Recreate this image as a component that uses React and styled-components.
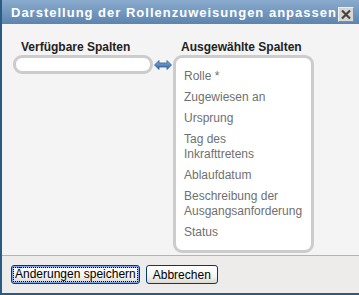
import React from 'react';
import styled, { createGlobalStyle } from 'styled-components';

const GlobalStyle = createGlobalStyle`
  html, body {
    margin: 0;
    padding: 0;
    background: #f4f4f4;
  }
  * {
    box-sizing: border-box;
  }
`;

const Dialog = styled.div`
  width: 359px;
  height: 295px;
  display: flex;
  flex-direction: column;
  border-left: 2px solid #2b5a85;
  border-bottom: 2px solid #2b5a85;
  font-family: "Liberation Sans", Arial, sans-serif;
  overflow: hidden;
`;

const TitleBar = styled.div`
  height: 24px;
  flex: none;
  display: flex;
  align-items: center;
  justify-content: space-between;
  padding: 0 5px 0 9px;
  background: linear-gradient(to bottom, #8aabcd 0%, #7398bf 50%, #5b84ae 100%);
`;

const Title = styled.div`
  color: #ffffff;
  font-size: 13px;
  font-weight: bold;
  letter-spacing: 1px;
  white-space: nowrap;
`;

const CloseButton = styled.button`
  width: 16px;
  height: 15px;
  flex: none;
  padding: 0;
  margin-top: 4px;
  display: flex;
  align-items: center;
  justify-content: center;
  background: #d8d6d0;
  border: 1px solid #8e8e8e;
  border-top-color: #f0f0f0;
  border-left-color: #f0f0f0;
`;

const Body = styled.div`
  flex: 1;
  background: #f4f4f4;
  padding: 16px 0 0 11px;
  display: flex;
  align-items: flex-start;
`;

const Column = styled.div`
  width: ${p => p.width}px;
  flex: none;
  display: flex;
  flex-direction: column;
`;

const Label = styled.div`
  font-size: 12px;
  font-weight: bold;
  line-height: 14px;
  color: #222;
  padding-left: 8px;
  margin-bottom: 1px;
`;

const ListBox = styled.div`
  background: #ffffff;
  border: 3px solid #cccccc;
  border-radius: 9px;
  height: ${p => p.height}px;
  padding: 11px 0 0 8px;
`;

const Item = styled.div`
  width: 112px;
  font-size: 12px;
  line-height: 15px;
  color: #707070;
  margin-bottom: 6px;
  white-space: normal;
`;

const Swap = styled.div`
  width: 20px;
  flex: none;
  display: flex;
  justify-content: center;
  padding-top: 20px;
`;

const Footer = styled.div`
  height: 38px;
  flex: none;
  background: #edecea;
  border-top: 1px solid #b4b4b4;
  display: flex;
  align-items: flex-start;
  gap: 6px;
  padding: 9px 0 0 9px;
`;

const Button = styled.button`
  height: 19px;
  padding: 0 ${p => (p.primary ? 2 : 6)}px;
  font-family: "Liberation Sans", Arial, sans-serif;
  font-size: 12px;
  color: #000;
  border: 1px solid #003c74;
  border-radius: 3px;
  background: linear-gradient(to bottom, #ffffff 0%, #f4f3ee 60%, #dcd9cf 100%);
  box-shadow: ${p => (p.primary ? 'inset 0 0 0 1px #7ea6ee, inset 0 0 0 2px #b8d0f6' : 'none')};
  display: flex;
  align-items: center;
`;

const FocusText = styled.span`
  outline: 1px dotted #000;
  outline-offset: 0;
  padding: 0 1px;
  line-height: 13px;
`;

const selected = [
  'Rolle *',
  'Zugewiesen an',
  'Ursprung',
  'Tag des Inkrafttretens',
  'Ablaufdatum',
  'Beschreibung der Ausgangsanforderung',
  'Status',
];

function SwapIcon() {
  return (
    <svg width="18" height="10" viewBox="0 0 18 10">
      <defs>
        <linearGradient id="sw" x1="0" y1="0" x2="0" y2="1">
          <stop offset="0" stopColor="#8ab4e4" />
          <stop offset="1" stopColor="#2a5d9c" />
        </linearGradient>
      </defs>
      <path
        d="M0.5 5 L5 0.5 L5 3 L13 3 L13 0.5 L17.5 5 L13 9.5 L13 7 L5 7 L5 9.5 Z"
        fill="url(#sw)"
        stroke="#2d5f98"
        strokeWidth="0.8"
        strokeLinejoin="round"
      />
    </svg>
  );
}

export default function App() {
  return (
    <>
      <GlobalStyle />
      <Dialog>
        <TitleBar>
          <Title>Darstellung der Rollenzuweisungen anpassen</Title>
          <CloseButton aria-label="Schließen">
            <svg width="12" height="11" viewBox="0 0 12 11">
              <path d="M2 1.5 L10 9.5 M10 1.5 L2 9.5" stroke="#444" strokeWidth="2.2" />
            </svg>
          </CloseButton>
        </TitleBar>
        <Body>
          <Column width={140}>
            <Label>Verfügbare Spalten</Label>
            <ListBox height={19} />
          </Column>
          <Swap>
            <SwapIcon />
          </Swap>
          <Column width={141}>
            <Label>Ausgewählte Spalten</Label>
            <ListBox height={198}>
              {selected.map(s => (
                <Item key={s}>{s}</Item>
              ))}
            </ListBox>
          </Column>
        </Body>
        <Footer>
          <Button primary>
            <FocusText>Änderungen speichern</FocusText>
          </Button>
          <Button>Abbrechen</Button>
        </Footer>
      </Dialog>
    </>
  );
}
